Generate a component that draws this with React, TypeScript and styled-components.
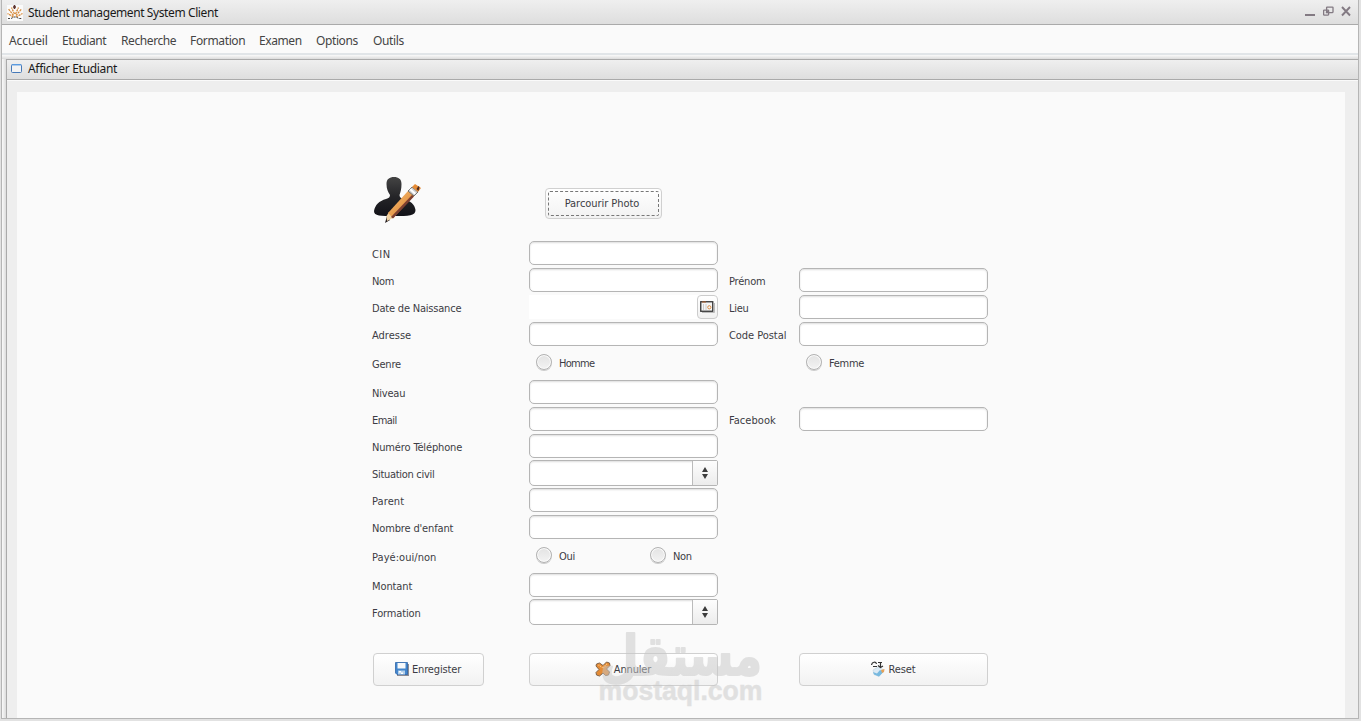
import React from 'react';
import styled, { createGlobalStyle } from 'styled-components';

const Global = createGlobalStyle`
  * { box-sizing: border-box; }
  body { margin: 0; overflow: hidden; background: #e2e2e2; }
`;

const ui = `'Noto Sans', 'Open Sans', sans-serif`;
const small = `'DejaVu Sans Condensed', 'DejaVu Sans', sans-serif`;
const bar = 'linear-gradient(#efefef, #dedede)';

const Window = styled.div`
  position: relative;
  width: 1358px;
  height: 719px;
  margin-left: 1px;
  display: flex;
  flex-direction: column;
  border: solid #b5b5b5;
  border-width: 0 1px 1px;
  background: #fafafa;
  font: 12px ${ui};
  color: #1a1a1a;
`;

const TitleBar = styled.header`
  height: 25px;
  flex: none;
  display: flex;
  align-items: center;
  padding: 1px 7px 0 5px;
  border-bottom: 1px solid #aaa;
  background: ${bar};
`;

const Title = styled.span<{ $track: number }>`
  margin-left: 5px;
  white-space: nowrap;
  letter-spacing: ${(p) => p.$track}px;
`;

const Controls = styled.div`
  margin-left: auto;
  display: flex;
  gap: 7px;
  padding-bottom: 2px;
`;

const MenuBar = styled.nav`
  height: 30px;
  flex: none;
  display: flex;
  align-items: center;
  padding-left: 7px;
  border-bottom: 2px solid #e1e5e8;
  color: #444;
`;

const MenuItem = styled.span<{ $w: number; $track?: number }>`
  width: ${(p) => p.$w}px;
  padding-top: 2px;
  white-space: nowrap;
  letter-spacing: ${(p) => p.$track ?? 0}px;
`;

const Desktop = styled.div`
  flex: 1;
  display: flex;
  padding: 4px 0 0 4px;
  background: linear-gradient(#fafafa, #dcdcdc 4px, transparent 4px),
    linear-gradient(90deg, #fafafa, #dcdcdc 4px);
`;

const Frame = styled.section`
  flex: 1;
  display: flex;
  flex-direction: column;
  border: solid #aaa;
  border-width: 1px 0 0 1px;
  background: #eee;
`;

const FrameTitle = styled.div`
  height: 20px;
  flex: none;
  display: flex;
  align-items: center;
  padding: 0 0 2px 4px;
  border-bottom: 1px solid #aaa;
  background: ${bar};
  box-shadow: 0 1px #fafafa;
`;

const Panel = styled.main`
  flex: 1;
  margin: 12px 13px 0 10px;
  padding: 83px 0 0 355px;
  background: #fafafa;
  font: 11px ${small};
  color: #3c3c44;
`;

const Top = styled.div`
  display: flex;
  height: 66px;
`;

const Grid = styled.form`
  display: grid;
  grid-template-columns: 157px 189px 11px 70px 189px;
  row-gap: 3px;
`;

const Row = styled.div<{ $tall?: boolean }>`
  display: grid;
  grid-column: 1 / -1;
  grid-template-columns: subgrid;
  align-items: center;
  height: ${(p) => (p.$tall ? 28 : 24)}px;
`;

const Label = styled.label<{ $second?: boolean; $track?: number }>`
  grid-column: ${(p) => (p.$second ? 4 : 1)};
  padding-top: 3px;
  line-height: 15px;
  white-space: nowrap;
  letter-spacing: ${(p) => p.$track ?? -0.2}px;
`;

const Field = styled.div<{ $second?: boolean }>`
  grid-column: ${(p) => (p.$second ? 5 : 2)};
  height: 24px;
  border: 1px solid #b5b5b5;
  border-radius: 5px;
  background: #fff;
  box-shadow: inset 0 1px 2px #ddd;
`;

const DateField = styled.div`
  grid-column: 2;
  height: 24px;
  display: flex;
  justify-content: flex-end;
  background: #fff;
`;

const DateButton = styled.div`
  width: 21px;
  height: 24px;
  display: grid;
  place-items: center;
  border: 1px solid #ccc;
  border-radius: 4px;
  background: linear-gradient(#fff, #f1f1f1);
`;

const Combo = styled.div`
  grid-column: 2;
  height: 26px;
  margin: -1px 0;
  display: flex;
  justify-content: flex-end;
  border: 1px solid #b5b5b5;
  border-radius: 5px 2px 2px 5px;
  background: #fff;
  box-shadow: inset 0 1px 2px #ddd;
`;

const ComboButton = styled.div`
  width: 25px;
  display: grid;
  place-items: center;
  border-left: 1px solid #bbb;
  background: linear-gradient(#fdfdfd, #ececec);
`;

const Options = styled.div<{ $second?: boolean }>`
  grid-column: ${(p) => (p.$second ? 5 : 2)};
  display: flex;
  padding-left: 7px;
`;

const Option = styled.div<{ $w?: number; $track?: number }>`
  width: ${(p) => p.$w ?? 100}px;
  display: flex;
  align-items: center;
  gap: 7px;
  letter-spacing: ${(p) => p.$track ?? -0.3}px;
`;

const Dot = styled.i`
  width: 16px;
  height: 16px;
  margin-bottom: 2px;
  border: 1px solid #b2b2b2;
  border-radius: 50%;
  background: linear-gradient(#e3e3e3, #f3f3f3);
  box-shadow: inset 0 0 0 1px #fafafa, 0 1px #ccc;
`;

const Button = styled.button<{ $w: number }>`
  width: ${(p) => p.$w}px;
  height: 33px;
  display: flex;
  align-items: center;
  justify-content: center;
  gap: 3px;
  padding: 0 1px 1px 0;
  border: 1px solid #d0d0d0;
  border-radius: 4px;
  background: linear-gradient(#fff, #f2f2f2);
  color: inherit;
  font: inherit;
  letter-spacing: -0.15px;
`;

const Browse = styled(Button)`
  height: 31px;
  margin: 13px 0 0 123px;
  padding: 2px;
  letter-spacing: -0.05px;
`;

const Focus = styled.span`
  flex: 1;
  height: 25px;
  padding-right: 3px;
  line-height: 24px;
  border: 1px dashed #777;
  border-radius: 2px;
`;

const Actions = styled.div`
  display: flex;
  margin: 29px 0 0 1px;
`;

const Gap = styled.div<{ $w: number }>`
  width: ${(p) => p.$w}px;
`;

const Mark = styled.svg`
  position: absolute;
  left: 590px;
  top: 622px;
  overflow: visible;
  opacity: 0.5;
  pointer-events: none;
`;

const AppIcon = () => (
  <svg width="16" height="16" viewBox="0 0 16 16">
    <path fill="#fafafa" d="M0 0h16v16H0z" />
    <g stroke="#d98c3d" strokeWidth="1.300" fill="none">
      <path strokeDasharray="2.200 .7" d="M6.500 12L.5 8.500M6.500 10.500L1.500 4M7.500 9L4.500 2.500M9 12l6.500-3.500M9 10.500L14.500 4M8.500 9l3-6.500" />
    </g>
    <path stroke="#5c3430" strokeWidth="1.500" d="M6 2h3M7.500 0v4" />
    <path stroke="#444" strokeDasharray="2 1" fill="none" d="M1 13.500h3l3-1.500h2l3 1.500h3" />
  </svg>
);

const FrameIcon = () => (
  <svg width="12" height="10" viewBox="0 0 12 10">
    <rect x=".5" y=".5" width="10" height="8" rx="1" fill="#f3f3f3" stroke="#4679b8" />
    <path d="M1 .7h9" stroke="#5b9be0" strokeWidth="1.500" />
  </svg>
);

const Person = () => (
  <svg width="50" height="50" viewBox="0 0 50 50">
    <defs>
      <linearGradient id="pen" x1="0" y1="0" x2="1" y2="1">
        <stop offset="0" stopColor="#f8c076" /><stop offset="1" stopColor="#d87b28" />
      </linearGradient>
      <linearGradient id="body" x1="0" y1="0" x2="0" y2="1">
        <stop offset="0" stopColor="#444" /><stop offset=".5" stopColor="#252528" /><stop offset="1" stopColor="#121218" />
      </linearGradient>
    </defs>
    <path fill="url(#body)" d="M14.500 9c0-5 3-7 7.500-7s7.500 2 7.500 7c0 5-1 8-2 11 0 2 1 3 4 4 7 2 11 5 12 11 0 6-7 6-21 6S2 41 2 36c1-6 5-10 12-12 3-1 4-2 4-4-2-3-3.500-6-3.500-11z" />
    <path fill="#201a1c" d="M13 48l2-7 3 4z" />
    <path fill="#f1d0a0" d="M14.500 41l2.500-4 6 5-8 4z" />
    <path fill="url(#pen)" d="M16 38l20-22 6 5-21 22z" />
    <path fill="#7d3f30" d="M21 43.500L42 21.500l-2-1.500L19 42z" />
    <path fill="#ccc" stroke="#444" strokeWidth=".7" d="M36 16l4-4 6 5-4 4z" />
    <path fill="#fff" d="M37.500 15l1.500-1.500 5 4.500-1.500 1.500z" />
    <path fill="#e58b35" d="M40 12l3-3 6 4-3 4z" />
    <path fill="#4b2b22" d="M44.500 14l2-3 1 1-1 4z" />
  </svg>
);

const Calendar = () => (
  <svg width="15" height="12" viewBox="0 0 15 12">
    <path d="M2 11.500h12.500V2" stroke="#bbb" fill="none" />
    <rect x=".75" y=".75" width="12" height="9.500" fill="#f5f5f5" stroke="#333" strokeWidth="1.300" />
    <path d="M2 1h4" stroke="#b5622d" /><path d="M3.500 3v6M6 3v6" stroke="#ccc" />
    <circle cx="9.300" cy="6.300" r="1.600" fill="none" stroke="#dc8c42" />
  </svg>
);

const Arrows = () => (
  <svg width="7" height="12" viewBox="0 0 7 12">
    <path fill="#3c3c3c" d="M3 0L6 5H0zM3 12L0 7h6z" />
  </svg>
);

const Disk = () => (
  <svg width="14" height="14" viewBox="0 0 14 14">
    <path fill="#8b8b93" d="M2 2h12v12H2z" />
    <path fill="#4385cc" stroke="#2e66aa" strokeWidth=".8" d="M.5.5h12v12H2L.5 11z" />
    <path fill="#f7f9fb" d="M2.500 1h8v5.500h-8z" />
    <path fill="#b4d0ea" d="M3 8.500h7v4H3z" /><path fill="#fff" d="M4 9h2v1.500H4zM6 10.500h2V12H6z" />
  </svg>
);

const Cross = () => (
  <svg width="16" height="16" viewBox="0 0 16 16">
    <path fill="#e48b35" stroke="#80634a" strokeWidth="1" strokeLinejoin="round"
      d="M1.500 3l3-1L8 4.500 11.500 1l3 1 .5 2.500L11.500 8l3 3-1 3-3 .5L8 12l-3.500 3-3-1-.5-2.500L4 8.500 1 5z" />
    <path stroke="#ffc683" strokeWidth="1.200" strokeDasharray="1 1" fill="none" d="M3.500 4L8 7l4-4" />
  </svg>
);

const ResetIcon = () => (
  <svg width="15" height="16" viewBox="0 0 15 16">
    <path fill="#dceaf4" stroke="#b9ccda" strokeWidth=".5" d="M2 9l5-3 6 3-5 6.500-5-2z" />
    <path fill="#78b9df" d="M2 11l4 1.500L9 9l4 1.500-5 5-5-2z" />
    <path fill="#e7a258" d="M10 9l3.500-1-.5 3-2 1z" />
    <path stroke="#333" strokeWidth="1.200" fill="none" d="M.5 4C1 .5 5 .5 5.500 3M2 5.500h4M7 1.500h4M9.500 1v5M7 4.500l2.500 2L12 5" />
  </svg>
);

const Line = ({ label, track, children, tall }: {
  label: string; track?: number; children?: React.ReactNode; tall?: boolean;
}) => (
  <Row $tall={tall}>
    <Label $track={track}>{label}</Label>
    {children ?? <Field />}
  </Row>
);

const Pair = ({ label, track }: { label: string; track?: number }) => (
  <>
    <Label $second $track={track}>{label}</Label>
    <Field $second />
  </>
);

const Select = () => (
  <Combo><ComboButton><Arrows /></ComboButton></Combo>
);

export default function App() {
  return (
    <>
      <Global />
      <Window>
        <TitleBar>
          <AppIcon />
          <Title $track={-0.4}>Student management System Client</Title>
          <Controls>
            <svg width="11" height="11"><path d="M0 9h10" stroke="#837a83" strokeWidth="2" /></svg>
            <svg width="11" height="11" fill="none" stroke="#837a83" strokeWidth="1.300">
              <rect x="3.600" y="1.100" width="6.400" height="5.500" rx=".5" />
              <rect x=".6" y="4.100" width="5" height="5" rx=".5" /><path d="M3 7l2-2" />
            </svg>
            <svg width="10" height="11"><path d="M1 1l8 8.500M9 1L1 9.500" stroke="#837a83" strokeWidth="1.900" /></svg>
          </Controls>
        </TitleBar>
        <MenuBar>
          <MenuItem $w={53} $track={-0.1}>Accueil</MenuItem>
          <MenuItem $w={59} $track={-0.4}>Etudiant</MenuItem>
          <MenuItem $w={69} $track={-0.4}>Recherche</MenuItem>
          <MenuItem $w={69} $track={-0.35}>Formation</MenuItem>
          <MenuItem $w={57} $track={-0.4}>Examen</MenuItem>
          <MenuItem $w={57} $track={-0.4}>Options</MenuItem>
          <MenuItem $w={57} $track={-0.35}>Outils</MenuItem>
        </MenuBar>
        <Desktop>
          <Frame>
            <FrameTitle>
              <FrameIcon />
              <Title $track={-0.31}>Afficher Etudiant</Title>
            </FrameTitle>
            <Panel>
              <Top>
                <Person />
                <Browse $w={117}><Focus>Parcourir Photo</Focus></Browse>
              </Top>
              <Grid>
                <Line label="CIN" track={0.4} />
                <Line label="Nom" track={-0.4}><Field /><Pair label="Prénom" /></Line>
                <Line label="Date de Naissance">
                  <DateField><DateButton><Calendar /></DateButton></DateField>
                  <Pair label="Lieu" track={-0.3} />
                </Line>
                <Line label="Adresse" track={0}><Field /><Pair label="Code Postal" track={-0.05} /></Line>
                <Line label="Genre" tall>
                  <Options><Option $track={-0.7}><Dot />Homme</Option></Options>
                  <Options $second><Option><Dot />Femme</Option></Options>
                </Line>
                <Line label="Niveau" />
                <Line label="Email" track={-0.55}><Field /><Pair label="Facebook" track={0.05} /></Line>
                <Line label="Numéro Téléphone" track={-0.15} />
                <Line label="Situation civil" track={-0.3}><Select /></Line>
                <Line label="Parent" track={0.1} />
                <Line label="Nombre d'enfant" track={-0.15} />
                <Line label="Payé:oui/non" track={0.05} tall>
                  <Options>
                    <Option $w={114}><Dot />Oui</Option>
                    <Option $w={60}><Dot />Non</Option>
                  </Options>
                </Line>
                <Line label="Montant" track={-0.1} />
                <Line label="Formation" track={-0.15}><Select /></Line>
              </Grid>
              <Actions>
                <Button $w={111}><Disk />Enregister</Button>
                <Gap $w={45} />
                <Button $w={189}><Cross />Annuler</Button>
                <Gap $w={81} />
                <Button $w={189}><ResetIcon />Reset</Button>
              </Actions>
            </Panel>
          </Frame>
        </Desktop>
        <Mark width="180" height="90" fill="#c8c8c8" stroke="#c8c8c8" strokeLinejoin="round">
          <text x="170" y="53" direction="rtl" textLength="162" lengthAdjust="spacingAndGlyphs" strokeWidth="2"
            fontFamily="'DejaVu Sans', sans-serif" fontWeight="700" fontSize="55">مستقل</text>
          <text x="6.500" y="78" textLength="164" lengthAdjust="spacingAndGlyphs" strokeWidth=".5"
            fontFamily="'Liberation Sans', sans-serif" fontWeight="700" fontSize="27">mostaql.com</text>
        </Mark>
      </Window>
    </>
  );
}
